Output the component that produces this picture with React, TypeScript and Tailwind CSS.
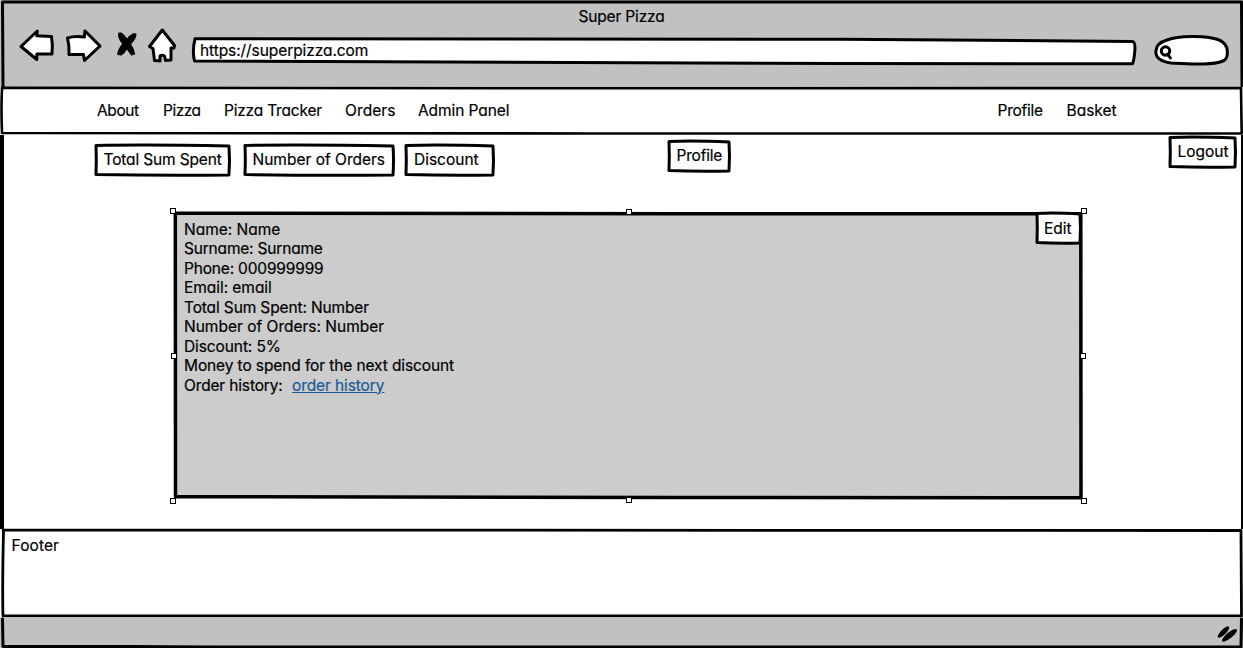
import React from "react";

type LabelProps = { className?: string; children: React.ReactNode };

function Label({ className = "", children }: LabelProps) {
  return <span className={`block whitespace-pre ${className}`}>{children}</span>;
}

function Frame({ w, h, d, stroke = 3, fill = "none" }: { w: number; h: number; d: string; stroke?: number; fill?: string }) {
  return (
    <svg className="pointer-events-none absolute left-0 top-0 overflow-visible" width={w} height={h} viewBox={`0 0 ${w} ${h}`} fill={fill} stroke="#000" strokeWidth={stroke} strokeLinejoin="round" strokeLinecap="round">
      <path d={d} />
    </svg>
  );
}

function SketchButton({ w, h, className, labelClass = "", children }: { w: number; h: number; className: string; labelClass?: string; children: React.ReactNode }) {
  const d = `M2 2.5 Q${w * 0.4} 1.5 ${w - 2} 3 Q${w - 1} ${h * 0.5} ${w - 2} ${h - 2} Q${w * 0.5} ${h - 1.2} 2 ${h - 2.5} Q2.6 ${h * 0.5} 2 2.5Z`;
  return (
    <button className={`relative flex shrink-0 items-start ${className}`}>
      <Frame w={w} h={h} d={d} fill="#fff" />
      <Label className={`relative ${labelClass}`}>{children}</Label>
    </button>
  );
}

function Handle({ className }: { className: string }) {
  return <i className={`absolute size-1.5 border border-black bg-white ${className}`} />;
}

const rows = [
  { text: "Name: Name", track: "" },
  { text: "Surname: Surname", track: "tracking-[-0.19px]" },
  { text: "Phone: 000999999", track: "tracking-[-0.18px]" },
  { text: "Email: email", track: "tracking-[-0.05px]" },
  { text: "Total Sum Spent: Number", track: "tracking-[-0.13px]" },
  { text: "Number of Orders: Number", track: "" },
  { text: "Discount: 5%", track: "tracking-[-0.1px]" },
  { text: "Money to spend for the next discount", track: "tracking-[-0.11px]" },
];

export default function App() {
  return (
    <div className="flex h-[648px] w-[1243px] flex-col overflow-hidden bg-white font-['Inter','Liberation_Sans',sans-serif] text-[15.5px] leading-[19.5px] text-black [-webkit-text-stroke:0.2px] [font-feature-settings:'cv11']">
      <header className="relative h-[87px] shrink-0 bg-[#c1c1c1]">
        <Frame w={1243} h={87} d="M3 87 L2.5 2 L1241.5 2 L1242 86" />
        <div className="flex h-[27px] justify-center pt-[7px]">
          <Label className="tracking-[-0.15px]">Super Pizza</Label>
        </div>
        <div className="flex pl-[18px]">
          <svg className="h-[40px] w-[170px] shrink-0" viewBox="18 27 170 40" fill="#fff" stroke="#000" strokeWidth="3" strokeLinejoin="round">
            <path d="M21 46.5 L37.3 31 L36.8 35.8 L51.5 36.5 Q53 45 52 54 L36.8 54 L36.8 59.5Z" />
            <path d="M67.5 38 Q74 35.8 84.3 37 L85 31 L100 46 L84.5 60.5 L83.5 54.5 L69 54.5 Q69.5 46 67.5 38Z" />
            <path d="M118.8 33 Q118 38 123 44 Q118.3 49 117.8 54.5 L121 55 Q125 52.5 126.8 48.5 L131.5 54.8 L134.5 54 Q134 49 130.3 44 Q135.5 39.5 136 34 L133.5 33.8 Q129 36 127 39.5 Q123.5 34.5 121 33Z" fill="#000" strokeWidth="1.2" />
            <path d="M162.3 30 L174.5 45.5 L174 48 L171 48 L171 60 L165.5 60.5 L164.5 56 Q162 54.5 160 56 L160 61 L154.5 60.5 L153 48.5 L149.5 46.5Z" />
          </svg>
          <div className="relative ml-[3px] mt-[10px] h-[28px] w-[946px] shrink-0 pl-[9px] pt-[4px]">
            <Frame w={946} h={28} fill="#fff" d="M4 1.8 L650 2.2 L941.5 4.5 Q944.5 5 943.8 14 Q943 24 941.5 26.8 L650 26.5 Q300 24 3.5 24 Q1 14 4 1.8Z" />
            <Label className="relative tracking-[-0.08px]">https://superpizza.com</Label>
          </div>
          <svg className="ml-[16px] mt-[7px] h-[34px] w-[78px] shrink-0" viewBox="1153 34 78 34" fill="#fff" stroke="#000" strokeWidth="3">
            <path d="M1167 40 C1178 36 1204 35 1218 39.5 Q1227 43 1227.3 51 Q1228 59 1223 61 C1210 66 1188 63.5 1171 63 Q1156 61 1155.8 52 Q1156 43 1167 40Z" />
            <circle cx="1165.5" cy="51" r="4.2" strokeWidth="3" />
            <path d="M1166.5 53.5 L1169 56 L1171 59" />
          </svg>
        </div>
      </header>

      <nav className="relative flex h-[48px] shrink-0 items-start bg-white pt-[14px]">
        <Frame w={1243} h={48} stroke={2.6} d="M2 0.8 L600 1.3 L1241 1 L1241.7 46.5 L600 46.5 L2 46 Q1 22 2 0.8Z" />
        <div className="flex pl-[97px]">
          <Label className="w-[66px] tracking-[-0.4px]">About</Label>
          <Label className="w-[61px] tracking-[-0.5px]">Pizza</Label>
          <Label className="w-[121px] tracking-[-0.2px]">Pizza Tracker</Label>
          <Label className="w-[73px] tracking-[0.1px]">Orders</Label>
          <Label className="w-[100px] tracking-[-0.08px]">Admin Panel</Label>
        </div>
        <div className="ml-auto flex">
          <Label className="w-[69px] tracking-[-0.25px]">Profile</Label>
          <Label className="w-[176.5px]">Basket</Label>
        </div>
      </nav>

      <main className="relative h-[394px] shrink-0 border-l-[4px] border-r-2 border-black bg-white">
        <div className="flex h-[74px] items-start pl-[90px]">
          <SketchButton w={137} h={34} className="mt-[8px] h-[34px] w-[149px] pl-[9.5px] pt-[7px]" labelClass="tracking-[-0.15px]">Total Sum Spent</SketchButton>
          <SketchButton w={152} h={34} className="mt-[8px] h-[34px] w-[161px] pl-[9.5px] pt-[7px]">Number of Orders</SketchButton>
          <SketchButton w={91} h={34} className="mt-[8px] h-[34px] w-[263px] pl-[10px] pt-[7px]">Discount</SketchButton>
          <SketchButton w={64} h={34} className="mt-[4px] h-[34px] w-[64px] pl-[9.5px] pt-[7px]" labelClass="tracking-[-0.2px]">Profile</SketchButton>
          <SketchButton w={69} h={34} className="ml-auto mr-[4px] h-[34px] w-[69px] pl-[9.5px] pt-[7px]">Logout</SketchButton>
        </div>
        <section className="relative ml-[170px] mt-[2px] flex h-[288px] w-[909px] items-start justify-between">
          <Frame w={909} h={288} stroke={3.5} fill="#ccc" d="M1.3 2.3 L500 2.7 L906.8 2.7 L907 286.7 L500 286.5 L1.5 285.7Z" />
          <div className="relative pl-[10px] pt-[8.5px]">
            {rows.map((r) => (
              <Label key={r.text} className={r.track}>{r.text}</Label>
            ))}
            <div className="flex">
              <Label className="w-[108px] tracking-[-0.15px]">Order history:</Label>
              <a className="block tracking-[-0.1px] text-[#1a5a96] underline">order history</a>
            </div>
          </div>
          <SketchButton w={47} h={34} className="mr-px h-[34px] w-[47px] pl-[9px] pt-[8px]">Edit</SketchButton>
          <Handle className="-left-1 -top-[3px]" />
          <Handle className="left-[452px] -top-[2px]" />
          <Handle className="-right-[4px] -top-[3px]" />
          <Handle className="-left-[3px] top-[142px]" />
          <Handle className="-right-[3px] top-[142px]" />
          <Handle className="-left-1 top-[287px]" />
          <Handle className="left-[452px] top-[286px]" />
          <Handle className="-right-[4px] top-[287px]" />
        </section>
      </main>

      <footer className="relative h-[88px] shrink-0 bg-white pl-[11.5px] pt-[7px]">
        <Frame w={1243} h={88} stroke={2.8} d="M3 1 L1241 1.5 L1241.5 87 L3 87 Q2.2 60 3.5 1Z" />
        <Label className="tracking-[0.1px]">Footer</Label>
      </footer>
      <div className="relative flex h-[31px] shrink-0 justify-end bg-[#c1c1c1]">
        <Frame w={1243} h={31} d="M2.5 2 L3 29.5 L130 29.5 L210 30 L1241 30 L1241.5 2" />
        <svg className="mr-[4px] mt-[7px] h-[18px] w-[22px]" viewBox="1217 624 22 18" fill="#000">
          <ellipse cx="1223.5" cy="632" rx="7.6" ry="2.6" transform="rotate(-45 1223.5 632)" />
          <ellipse cx="1229.5" cy="635.3" rx="9.4" ry="2.9" transform="rotate(-39 1229.5 635.3)" />
        </svg>
      </div>
    </div>
  );
}
